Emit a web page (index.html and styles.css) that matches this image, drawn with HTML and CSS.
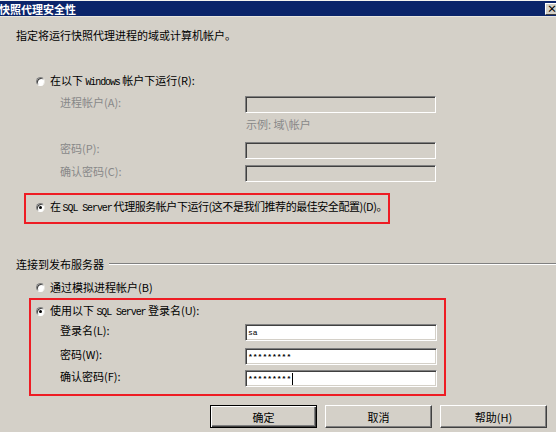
FILE: index.html
```html
<!DOCTYPE html>
<html lang="zh-CN">
<head>
<meta charset="utf-8">
<title>快照代理安全性</title>
<link rel="stylesheet" href="styles.css">
</head>
<body>
<div class="titlebar">
  <span class="title">快照代理安全性</span>
  <span class="closebtn">×</span>
</div>
<div class="dialog">
  <p class="desc">指定将运行快照代理进程的域或计算机帐户。</p>

  <div class="radio-row r-win">
    <span class="radio"></span>
    <span>在以下 <span class="lat">Windows</span> 帐户下运行(R):</span>
  </div>

  <div class="field disabled f-a">
    <span class="label">进程帐户(A):</span>
    <span class="input"></span>
  </div>
  <div class="example">示例: 域\帐户</div>
  <div class="field disabled f-p">
    <span class="label">密码(P):</span>
    <span class="input"></span>
  </div>
  <div class="field disabled f-c">
    <span class="label">确认密码(C):</span>
    <span class="input"></span>
  </div>

  <div class="redbox box1">
    <div class="radio-row tight">
      <span class="radio checked"></span>
      <span>在 <span class="lat">SQL Server</span> 代理服务帐户下运行(这不是我们推荐的最佳安全配置)(D)。</span>
    </div>
  </div>

  <div class="group-head">
    <span>连接到发布服务器</span>
    <span class="etch"></span>
  </div>

  <div class="radio-row r-imp">
    <span class="radio"></span>
    <span>通过模拟进程帐户(B)</span>
  </div>

  <div class="redbox box2">
    <div class="radio-row">
      <span class="radio checked"></span>
      <span>使用以下 <span class="lat">SQL Server</span> 登录名(U):</span>
    </div>
    <div class="field f-l">
      <span class="label">登录名(L):</span>
      <span class="input white"><span class="val">sa</span></span>
    </div>
    <div class="field f-w">
      <span class="label">密码(W):</span>
      <span class="input white"><span class="val star">*********</span></span>
    </div>
    <div class="field f-f">
      <span class="label">确认密码(F):</span>
      <span class="input white"><span class="val star">*********</span><span class="caret"></span></span>
    </div>
  </div>

  <div class="buttons">
    <span class="btn default">确定</span>
    <span class="btn">取消</span>
    <span class="btn">帮助(H)</span>
  </div>
</div>
</body>
</html>
```

FILE: styles.css
```css
html, body {
  margin: 0;
  padding: 0;
  background: #d4d0c8;
  overflow: hidden;
}
body {
  width: 556px;
  height: 432px;
  font-family: "Noto Sans CJK SC", "Noto Sans", sans-serif;
  font-size: 11px;
  line-height: 12px;
  color: #000;
  border-top: 1px solid #f4f3ef;
  box-sizing: border-box;
}

.titlebar {
  height: 15px;
  background: #0a246a;
  display: flex;
  align-items: center;
  justify-content: space-between;
  overflow: hidden;
  border-bottom: 1px solid #e8e6df;
}
.title {
  color: #fff;
  font-weight: bold;
  font-size: 11px;
  margin-left: -1px;
}
.closebtn {
  width: 14px;
  height: 10px;
  margin-right: -6px;
  background: #d4d0c8;
  border: 1px solid;
  border-color: #fff #404040 #404040 #fff;
  font-size: 10px;
  line-height: 10px;
  font-weight: bold;
  color: #000;
  padding-left: 1px;
  box-sizing: content-box;
}

.dialog {
  display: flex;
  flex-direction: column;
  align-items: flex-start;
}

.desc {
  margin: 12px 0 0 16px;
  height: 12px;
}

.lat {
  font-family: "Liberation Mono", "DejaVu Sans Mono", monospace;
  font-size: 10px;
  letter-spacing: -1.1px;
}

.radio-row {
  display: flex;
  align-items: center;
  height: 12px;
  margin-left: 36px;
  gap: 5px;
  white-space: nowrap;
}
.radio-row.tight { letter-spacing: -0.45px; }
.radio-row.tight .lat { letter-spacing: -1.1px; }
.r-win { margin-top: 34px; }
.r-imp { margin-top: 11px; }

.radio {
  width: 9px;
  height: 9px;
  border-radius: 50%;
  background: #fff;
  box-sizing: border-box;
  border: 1px solid;
  border-color: #808080 #e6e4de #ffffff #808080;
  box-shadow: inset 1px 1px 0 #404040;
  position: relative;
  flex: none;
}
.radio.checked::after {
  content: "";
  position: absolute;
  left: 2px;
  top: 2px;
  width: 3px;
  height: 3px;
  border-radius: 50%;
  background: #000;
}

.field {
  display: flex;
  align-items: flex-start;
  margin-left: 60px;
}
.label {
  width: 185px;
  height: 12px;
  flex: none;
  white-space: nowrap;
}
.disabled .label, .example {
  color: #888888;
}
.input {
  width: 191px;
  height: 17px;
  box-sizing: border-box;
  border: 1px solid;
  border-color: #808080 #ffffff #ffffff #808080;
  box-shadow: inset 1px 1px 0 #404040, inset -1px -1px 0 #d4d0c8;
  background: #d4d0c8;
  display: flex;
  align-items: center;
  padding-left: 2px;
}
.input.white {
  background: #fff;
  width: 192px;
}
.val {
  font-family: "Liberation Mono", "DejaVu Sans Mono", monospace;
  font-size: 8px;
  line-height: 10px;
}
.val.star {
  font-weight: bold;
  font-size: 8px;
}
.caret {
  width: 1px;
  height: 12px;
  background: #000;
  margin-left: 1px;
}

.f-a { margin-top: 9px; }
.example {
  margin: 5px 0 0 246px;
  height: 12px;
}
.f-p { margin-top: 12px; }
.f-c { margin-top: 6px; }

.redbox {
  border: 2px solid #ee1c24;
  box-sizing: border-box;
}
.box1 {
  margin: 11px 0 0 24px;
  width: 366px;
  height: 31px;
  padding-top: 6px;
}
.box1 .radio-row { margin-left: 10px; }

.group-head {
  margin: 34px 0 0 16px;
  width: 540px;
  display: flex;
  align-items: center;
  height: 12px;
}
.etch {
  flex: 1;
  margin-left: 5px;
  height: 0;
  border-top: 1px solid #808080;
  border-bottom: 1px solid #ffffff;
}

.box2 {
  margin: 5px 0 0 29px;
  width: 417px;
  height: 98px;
  padding-top: 5px;
  display: flex;
  flex-direction: column;
}
.box2 .radio-row { margin-left: 5px; }
.box2 .field { margin-left: 29px; }
.f-l { margin-top: 7px; }
.f-w { margin-top: 7px; }
.f-f { margin-top: 5px; }

.buttons {
  display: flex;
  gap: 8px;
  margin: 9px 0 0 210px;
}
.btn {
  width: 107px;
  height: 23px;
  box-sizing: border-box;
  background: #d4d0c8;
  border: 1px solid;
  border-color: #ffffff #404040 #404040 #ffffff;
  box-shadow: inset -1px -1px 0 #808080;
  display: flex;
  align-items: center;
  justify-content: center;
}
.btn.default {
  border-color: #000;
  box-shadow: inset 1px 1px 0 #fff, inset -1px -1px 0 #404040, inset -2px -2px 0 #808080;
}
```
